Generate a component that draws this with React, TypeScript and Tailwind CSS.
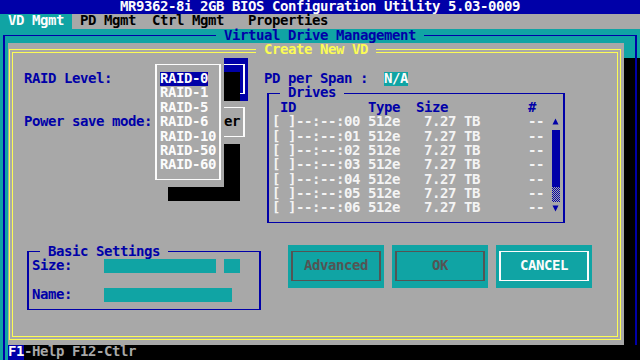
import React from "react";

const FRAME = "mt-[6.5px] mb-[7px] ml-[3px] mr-[3px] border-x-2 border-y";

function Button({ area, label, tone }: { area: string; label: string; tone: "dim" | "on" }) {
  const border = tone === "on" ? "border-[#fcfcfc]" : "border-[#545454]";
  const text = tone === "on" ? "text-[#fcfcfc]" : "text-[#545454]";
  return (
    <div className={`${area} grid grid-cols-1 grid-rows-[repeat(3,14.4px)] bg-[#10a4a4]`}>
      <div className={`col-start-1 row-start-1 row-span-3 ${FRAME} ${border}`} />
      <div className={`col-start-1 row-start-2 flex justify-center ${text}`}>{label}</div>
    </div>
  );
}

function UpArrow() {
  return (
    <svg width="8" height="14" viewBox="0 0 8 14" className="block">
      <polygon points="0.5,9.5 3.5,3.5 6.5,9.5" fill="#0000a8" />
    </svg>
  );
}

function DownArrow() {
  return (
    <svg width="8" height="14" viewBox="0 0 8 14" className="block">
      <polygon points="0.5,3.5 6.5,3.5 3.5,9.5" fill="#0000a8" />
    </svg>
  );
}

export default function App() {
  const drives = ["00", "01", "02", "03", "04", "05", "06"];
  const raids = ["RAID-1", "RAID-5", "RAID-6", "RAID-10", "RAID-50", "RAID-60"];
  return (
    <div className="grid h-[360px] w-[640px] grid-cols-[repeat(80,8px)] grid-rows-[repeat(25,14.4px)] overflow-hidden whitespace-pre bg-black font-['DejaVu_Sans_Mono',monospace] text-[14px] font-bold leading-[12.4px] tracking-[-0.43px]">
      {/* title bar */}
      <div className="col-start-1 col-span-80 row-start-1 flex justify-center bg-[#0000a8] text-[#fcfcfc]">
        MR9362-8i 2GB BIOS Configuration Utility 5.03-0009
      </div>
      {/* menu bar */}
      <div className="col-start-1 col-span-80 row-start-2 flex bg-[#a8a8a8] text-black">
        <span className="w-[72px] bg-[#10a4a4] text-[#fcfcfc]"> VD Mgmt </span>
        <span> PD Mgmt  Ctrl Mgmt   Properties</span>
      </div>

      {/* outer window */}
      <div className="col-start-1 col-span-80 row-start-3 row-span-23 bg-[#10a4a4]" />
      <div className="col-start-79 col-span-2 row-start-5 row-span-21 bg-black" />
      <div className="col-start-1 col-span-80 row-start-3 row-span-23 mt-[6.5px] ml-[3px] mr-[3px] border-x-2 border-t border-[#0000a8]" />
      <div className="col-start-28 col-span-26 row-start-3 bg-[#10a4a4] text-[#0000a8]"> Virtual Drive Management </div>

      {/* dialog */}
      <div className="col-start-2 col-span-77 row-start-4 row-span-21 bg-[#a8a8a8]" />
      <div className="col-start-2 col-span-77 row-start-4 row-span-21 mt-[5.5px] mb-[5px] ml-[1px] mr-[3px] border-4 border-double border-[#fcfc54]" />
      <div className="col-start-33 col-span-15 row-start-4 bg-[#a8a8a8] text-[#fcfc54]"> Create New VD </div>

      <div className="col-start-4 col-span-11 row-start-6 text-[#0000a8]">RAID Level:</div>
      <div className="col-start-4 col-span-16 row-start-9 text-[#0000a8]">Power save mode:</div>

      {/* RAID level combo (focused) */}
      <div className="col-start-20 col-span-12 row-start-5 row-span-3 bg-[#0000a8]" />
      <div className={`col-start-20 col-span-12 row-start-5 row-span-3 ${FRAME} border-[#fcfcfc]`} />

      {/* dropdown shadow */}
      <div className="col-start-22 col-span-9 row-start-6 row-span-9 bg-black" />

      {/* power save combo */}
      <div className="col-start-20 col-span-12 row-start-8 row-span-3 bg-[#a8a8a8]" />
      <div className={`col-start-20 col-span-12 row-start-8 row-span-3 ${FRAME} border-[#fcfcfc]`} />
      <div className="col-start-29 col-span-2 row-start-9 text-black">er</div>

      {/* dropdown list */}
      <div className="col-start-20 col-span-9 row-start-5 row-span-9 bg-[#a8a8a8]" />
      <div className={`col-start-20 col-span-9 row-start-5 row-span-9 ${FRAME} border-[#fcfcfc]`} />
      <div className="col-start-21 col-span-7 row-start-6 row-span-7 flex flex-col text-[#fcfcfc]">
        <div className="h-[14.4px] shrink-0 self-start bg-[#0000a8]">RAID-0</div>
        {raids.map((r) => (
          <div key={r} className="h-[14.4px] shrink-0">
            {r}
          </div>
        ))}
      </div>

      {/* PD per span */}
      <div className="col-start-34 col-span-13 row-start-6 text-[#0000a8]">PD per Span :</div>
      <div className="col-start-49 col-span-3 row-start-6 bg-[#10a4a4] text-[#fcfcfc]">N/A</div>

      {/* drives box */}
      <div className={`col-start-34 col-span-38 row-start-7 row-span-10 ${FRAME} border-[#0000a8]`} />
      <div className="col-start-36 col-span-8 row-start-7 bg-[#a8a8a8] text-[#0000a8]"> Drives </div>
      <div className="col-start-36 col-span-32 row-start-8 text-[#0000a8]">
        {"ID         Type  Size          #"}
      </div>
      <div className="col-start-35 col-span-34 row-start-9 row-span-7 flex flex-col text-[#f4f4f4]">
        {drives.map((d) => (
          <div key={d} className="h-[14.4px] shrink-0">
            {`[ ]--:--:${d} 512e   7.27 TB      --`}
          </div>
        ))}
      </div>
      <div className="col-start-70 row-start-9 row-span-7 flex flex-col">
        <div className="h-[14.4px] shrink-0">
          <UpArrow />
        </div>
        <div className="h-[57.6px] shrink-0 bg-[#0000a8]" />
        <div className="h-[14.4px] shrink-0 [background-image:repeating-conic-gradient(#0000a8_0_25%,#a8a8a8_0_50%)] [background-size:2px_2px]" />
        <div className="h-[14.4px] shrink-0">
          <DownArrow />
        </div>
      </div>

      {/* basic settings */}
      <div className={`col-start-4 col-span-30 row-start-18 row-span-5 ${FRAME} border-[#0000a8]`} />
      <div className="col-start-6 col-span-16 row-start-18 bg-[#a8a8a8] text-[#0000a8]"> Basic Settings </div>
      <div className="col-start-5 col-span-5 row-start-19 text-[#0000a8]">Size:</div>
      <div className="col-start-14 col-span-14 row-start-19 bg-[#10a4a4]" />
      <div className="col-start-29 col-span-2 row-start-19 bg-[#10a4a4]" />
      <div className="col-start-5 col-span-5 row-start-21 text-[#0000a8]">Name:</div>
      <div className="col-start-14 col-span-16 row-start-21 bg-[#10a4a4]" />

      {/* buttons */}
      <Button area="col-start-37 col-span-12 row-start-18 row-span-3" label="Advanced" tone="dim" />
      <Button area="col-start-50 col-span-12 row-start-18 row-span-3" label="OK" tone="dim" />
      <Button area="col-start-63 col-span-12 row-start-18 row-span-3" label="CANCEL" tone="on" />

      {/* status bar */}
      <div className="col-start-2 col-span-79 row-start-25 flex bg-black">
        <span className="w-[16px] bg-[#0000a8] text-[#fcfcfc]">F1</span>
        <span className="text-[#a8a8a8]">-Help F12-Ctlr</span>
      </div>
    </div>
  );
}
